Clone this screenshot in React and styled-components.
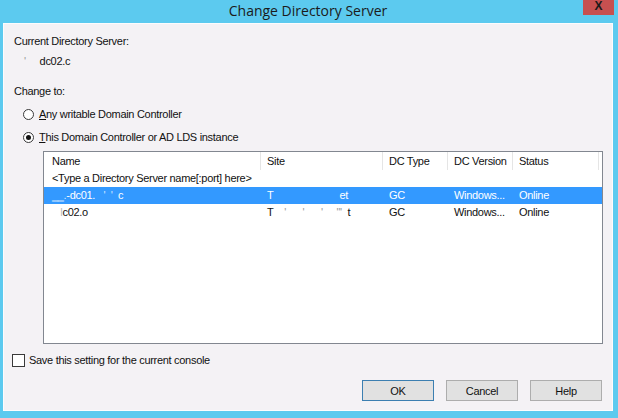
import React from "react";
import styled, { createGlobalStyle } from "styled-components";

const Global = createGlobalStyle`
  html, body {
    margin: 0;
    padding: 0;
  }

  body {
    width: 618px;
    height: 418px;
    overflow: hidden;
    background: #5ccaef;
    font-family: "Liberation Sans", Arial, sans-serif;
    font-size: 11px;
    color: #111;
  }
`;

const Window = styled.div`
  width: 618px;
  height: 418px;
  box-sizing: border-box;
  padding: 0 5px 7px 3px;
  background: #5ccaef;
  display: flex;
  flex-direction: column;
`;

const TitleBar = styled.div`
  position: relative;
  height: 23px;
  flex: none;
  display: flex;
  align-items: center;
  justify-content: center;
  padding-bottom: 3px;
  box-sizing: border-box;
  font-family: "Open Sans", "Liberation Sans", sans-serif;
  font-size: 14px;
  color: #1b1b1b;
`;

const CloseButton = styled.div`
  position: absolute;
  top: 0;
  right: -1px;
  width: 31px;
  height: 15px;
  box-sizing: border-box;
  padding-top: 1px;
  background: #c75050;
  text-align: center;
  font-family: "Liberation Sans", Arial, sans-serif;
  font-weight: bold;
  font-size: 12px;
  line-height: 11px;
  color: #1a1a1a;
`;

const Content = styled.div`
  flex: 1;
  background: #f4f2f5;
  border: 1px solid #fcfcfd;
  display: flex;
  flex-direction: column;
  letter-spacing: -0.3px;
`;

const Label = styled.div`
  line-height: 13px;
  height: 13px;
  padding-left: 10px;
  margin-top: ${(p) => p.$top}px;
`;

const ServerValue = styled.div`
  line-height: 13px;
  height: 13px;
  margin-top: 7px;
  padding-left: 20px;
  white-space: pre;
`;

const Faint = styled.span`
  color: ${(p) => p.$color || "#9a9a9a"};
`;

const RadioRow = styled.label`
  display: flex;
  align-items: center;
  gap: 5px;
  height: 13px;
  line-height: 13px;
  padding-left: 19px;
  margin-top: 10px;
`;

const Radio = styled.span`
  width: 11px;
  height: 11px;
  box-sizing: border-box;
  border: 1px solid #3a3a3a;
  border-radius: 50%;
  background: #fff;
  display: flex;
  align-items: center;
  justify-content: center;

  &::after {
    content: "";
    width: 5px;
    height: 5px;
    border-radius: 50%;
    background: ${(p) => (p.$checked ? "#111" : "transparent")};
  }
`;

const ListBox = styled.div`
  margin: 7px 9px 0 39px;
  height: 193px;
  box-sizing: border-box;
  border: 1px solid #828790;
  background: #fff;
`;

const Row = styled.div`
  display: grid;
  grid-template-columns: 217px 122px 65px 65px 86px;
  height: ${(p) => (p.$header ? 18 : 17)}px;
  line-height: ${(p) => (p.$header ? 18 : 17)}px;
  background: ${(p) => (p.$selected ? "#3399ff" : "#fff")};
  color: ${(p) => (p.$selected ? "#fff" : "#111")};
`;

const Cell = styled.div`
  padding-left: ${(p) => (p.$first ? 8 : 6)}px;
  white-space: pre;
  overflow: hidden;
  border-right: ${(p) => (p.$header ? "1px solid #e5e5e5" : "none")};
  ${(p) => p.$span && "grid-column: 1 / -1;"}
`;

const CheckRow = styled.label`
  display: flex;
  align-items: center;
  gap: 4px;
  height: 13px;
  line-height: 13px;
  margin: 10px 0 0 8px;
`;

const CheckBox = styled.span`
  width: 13px;
  height: 13px;
  box-sizing: border-box;
  border: 1px solid #3a3a3a;
  background: #fff;
`;

const ButtonRow = styled.div`
  display: flex;
  justify-content: flex-end;
  gap: 12px;
  margin-top: 13px;
  padding-right: 10px;
`;

const Button = styled.button`
  width: 72px;
  height: 21px;
  box-sizing: border-box;
  padding: 0;
  background: #e1e1e1;
  border: 1px solid ${(p) => (p.$default ? "#3c7fb1" : "#adadad")};
  font-family: "Liberation Sans", Arial, sans-serif;
  font-size: 11px;
  letter-spacing: -0.3px;
  color: #111;
`;

const columns = ["Name", "Site", "DC Type", "DC Version", "Status"];

const servers = [
  {
    name: (
      <>
        <Faint $color="#cfe6ff">‗‗.</Faint>-dc01.{"   "}
        <Faint $color="#cfe6ff">'  '</Faint>
        {"  c"}
      </>
    ),
    site: (
      <>
        {"T"}
        <Faint $color="#cfe6ff">{"                        "}</Faint>
        {"et"}
      </>
    ),
    selected: true,
  },
  {
    name: (
      <>
        {"   "}
        <Faint $color="#bbb">l</Faint>
        {"c02.o"}
      </>
    ),
    site: (
      <>
        {"T    "}
        <Faint>{"'      '      '     \"'  "}</Faint>
        {"t"}
      </>
    ),
    selected: false,
  },
];

const App = () => {
  return (
    <Window>
      <Global />
      <TitleBar>
        Change Directory Server
        <CloseButton>X</CloseButton>
      </TitleBar>
      <Content>
        <Label $top={11}>Current Directory Server:</Label>
        <ServerValue>
          <Faint>'</Faint>
          {"     dc02.c"}
        </ServerValue>
        <Label $top={17}>Change to:</Label>
        <RadioRow>
          <Radio />
          <span>
            <u>A</u>ny writable Domain Controller
          </span>
        </RadioRow>
        <RadioRow>
          <Radio $checked />
          <span>
            <u>T</u>his Domain Controller or AD LDS instance
          </span>
        </RadioRow>
        <ListBox>
          <Row $header>
            {columns.map((c, i) => (
              <Cell key={c} $header $first={i === 0}>
                {c}
              </Cell>
            ))}
          </Row>
          <Row>
            <Cell $first $span>{"<Type a Directory Server name[:port] here>"}</Cell>
          </Row>
          {servers.map((s, i) => (
            <Row key={i} $selected={s.selected}>
              <Cell $first>{s.name}</Cell>
              <Cell>{s.site}</Cell>
              <Cell>GC</Cell>
              <Cell>Windows...</Cell>
              <Cell>Online</Cell>
            </Row>
          ))}
        </ListBox>
        <CheckRow>
          <CheckBox />
          <span>Save this setting for the current console</span>
        </CheckRow>
        <ButtonRow>
          <Button $default>OK</Button>
          <Button>Cancel</Button>
          <Button>Help</Button>
        </ButtonRow>
      </Content>
    </Window>
  );
};

export default App;
